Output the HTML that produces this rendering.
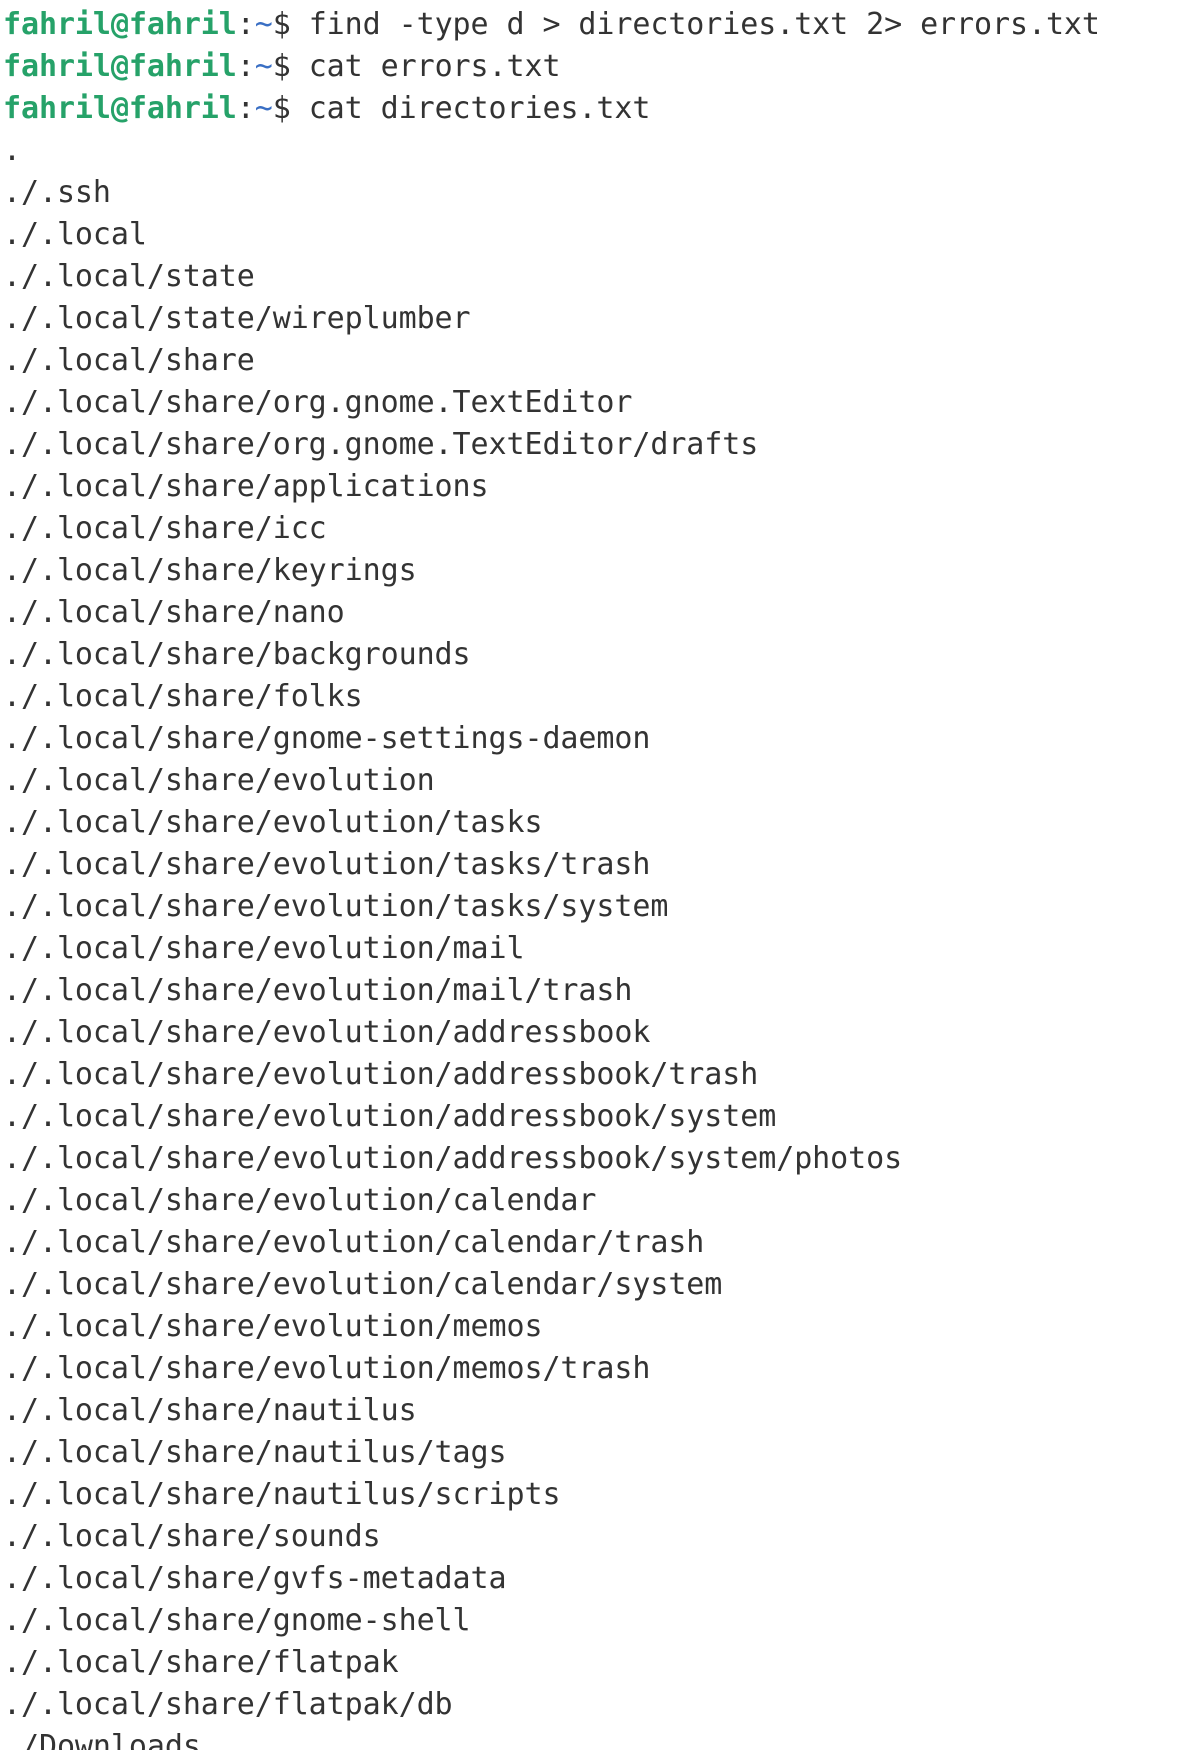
<!DOCTYPE html>
<html><head><meta charset="utf-8"><style>
html,body{margin:0;padding:0;background:#fff;width:1188px;height:1750px;overflow:hidden}
pre{margin:0;padding:4px 0 0 3px;font-family:"DejaVu Sans Mono","Liberation Mono",monospace;font-size:30px;letter-spacing:-0.08px;line-height:42px;color:#333}
.u{color:#26a269;font-weight:bold}.t{color:#3a6fc4}
</style></head><body><pre><span class="u">fahril@fahril</span>:<span class="t">~</span>$ find -type d &gt; directories.txt 2&gt; errors.txt
<span class="u">fahril@fahril</span>:<span class="t">~</span>$ cat errors.txt
<span class="u">fahril@fahril</span>:<span class="t">~</span>$ cat directories.txt
.
./.ssh
./.local
./.local/state
./.local/state/wireplumber
./.local/share
./.local/share/org.gnome.TextEditor
./.local/share/org.gnome.TextEditor/drafts
./.local/share/applications
./.local/share/icc
./.local/share/keyrings
./.local/share/nano
./.local/share/backgrounds
./.local/share/folks
./.local/share/gnome-settings-daemon
./.local/share/evolution
./.local/share/evolution/tasks
./.local/share/evolution/tasks/trash
./.local/share/evolution/tasks/system
./.local/share/evolution/mail
./.local/share/evolution/mail/trash
./.local/share/evolution/addressbook
./.local/share/evolution/addressbook/trash
./.local/share/evolution/addressbook/system
./.local/share/evolution/addressbook/system/photos
./.local/share/evolution/calendar
./.local/share/evolution/calendar/trash
./.local/share/evolution/calendar/system
./.local/share/evolution/memos
./.local/share/evolution/memos/trash
./.local/share/nautilus
./.local/share/nautilus/tags
./.local/share/nautilus/scripts
./.local/share/sounds
./.local/share/gvfs-metadata
./.local/share/gnome-shell
./.local/share/flatpak
./.local/share/flatpak/db
./Downloads
</pre></body></html>
